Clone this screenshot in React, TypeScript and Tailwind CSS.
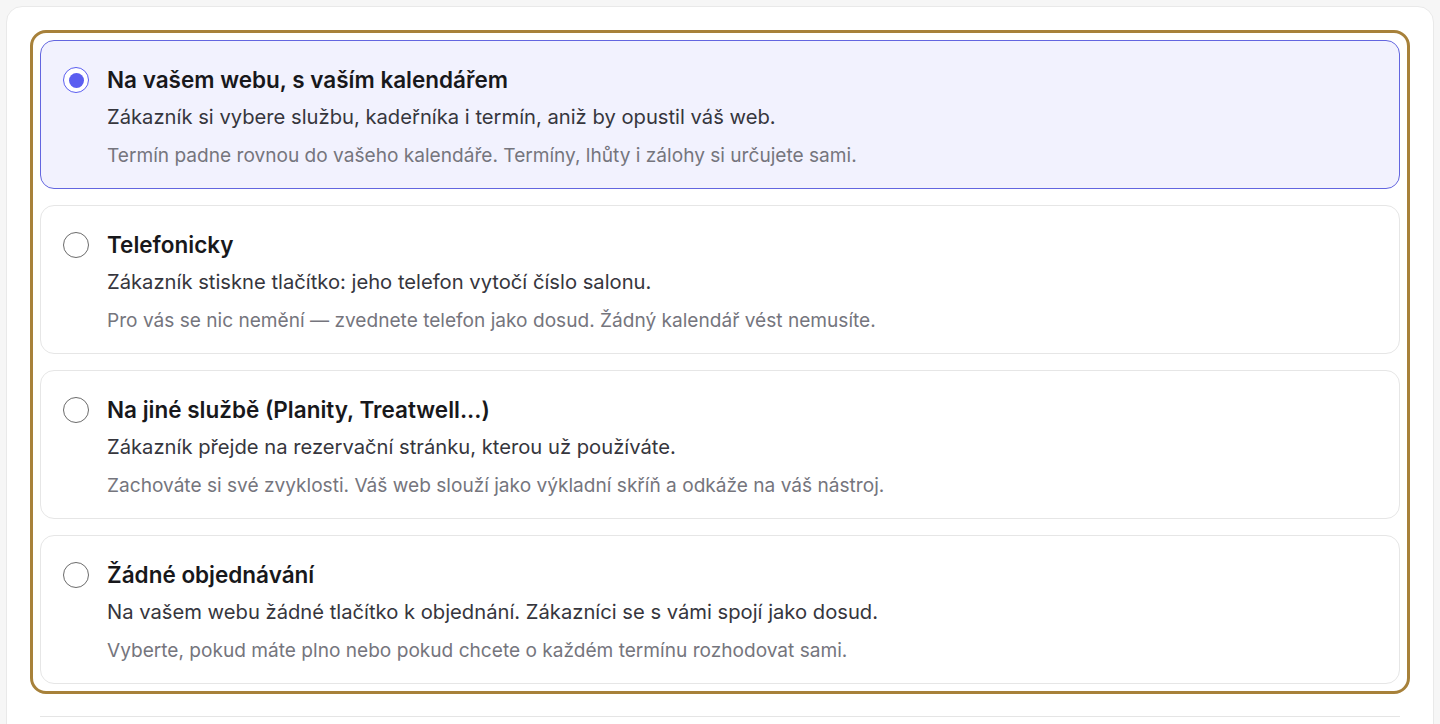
import { useState } from "react";

type Option = {
  id: string;
  title: string;
  description: string;
  note: string;
};

const OPTIONS: Option[] = [
  {
    id: "calendar",
    title: "Na vašem webu, s vaším kalendářem",
    description: "Zákazník si vybere službu, kadeřníka i termín, aniž by opustil váš web.",
    note: "Termín padne rovnou do vašeho kalendáře. Termíny, lhůty i zálohy si určujete sami.",
  },
  {
    id: "phone",
    title: "Telefonicky",
    description: "Zákazník stiskne tlačítko: jeho telefon vytočí číslo salonu.",
    note: "Pro vás se nic nemění — zvednete telefon jako dosud. Žádný kalendář vést nemusíte.",
  },
  {
    id: "external",
    title: "Na jiné službě (Planity, Treatwell...)",
    description: "Zákazník přejde na rezervační stránku, kterou už používáte.",
    note: "Zachováte si své zvyklosti. Váš web slouží jako výkladní skříň a odkáže na váš nástroj.",
  },
  {
    id: "none",
    title: "Žádné objednávání",
    description: "Na vašem webu žádné tlačítko k objednání. Zákazníci se s vámi spojí jako dosud.",
    note: "Vyberte, pokud máte plno nebo pokud chcete o každém termínu rozhodovat sami.",
  },
];

function Radio({ checked }: { checked: boolean }) {
  return (
    <span
      className={`mt-[1px] flex h-[26px] w-[26px] shrink-0 items-center justify-center rounded-full border-[1.5px] ${
        checked ? "border-[#5b5ef0] bg-white" : "border-[#6b6b6b] bg-white"
      }`}
    >
      {checked && <span className="h-[15px] w-[15px] rounded-full bg-[#5b5ef0]" />}
    </span>
  );
}

export default function App() {
  const [selected, setSelected] = useState("calendar");

  return (
    <div
      className="min-h-screen bg-[#f6f6f6] p-[6px]"
      style={{ fontFamily: "Inter, 'Noto Sans', sans-serif" }}
    >
      <div className="rounded-2xl border border-[#e9e9e9] bg-white px-[23px] pt-[23px] pb-6">
        <div className="rounded-[16px] border-[3px] border-[#a7813a] p-[7px]">
          <div className="flex flex-col gap-4">
            {OPTIONS.map((opt) => {
              const checked = selected === opt.id;
              return (
                <button
                  key={opt.id}
                  type="button"
                  onClick={() => setSelected(opt.id)}
                  className={`flex items-start gap-[18px] rounded-[14px] border pt-[25px] pr-6 pb-[21px] pl-[22px] text-left ${
                    checked
                      ? "border-[#6366e0] bg-[#f2f2fe]"
                      : "border-[#e6e6e6] bg-white"
                  }`}
                >
                  <Radio checked={checked} />
                  <div className="min-w-0">
                    <div className="text-[22.5px] font-semibold leading-7 text-[#18181b]">
                      {opt.title}
                    </div>
                    <div className="mt-[9px] text-[20.2px] leading-7 text-[#36363d]">
                      {opt.description}
                    </div>
                    <div className="mt-[12px] text-[19.1px] leading-6 text-[#75757d]">
                      {opt.note}
                    </div>
                  </div>
                </button>
              );
            })}
          </div>
        </div>
        <div className="mx-[10px] mt-[22px] border-t border-[#e5e5e5]" />
      </div>
    </div>
  );
}
